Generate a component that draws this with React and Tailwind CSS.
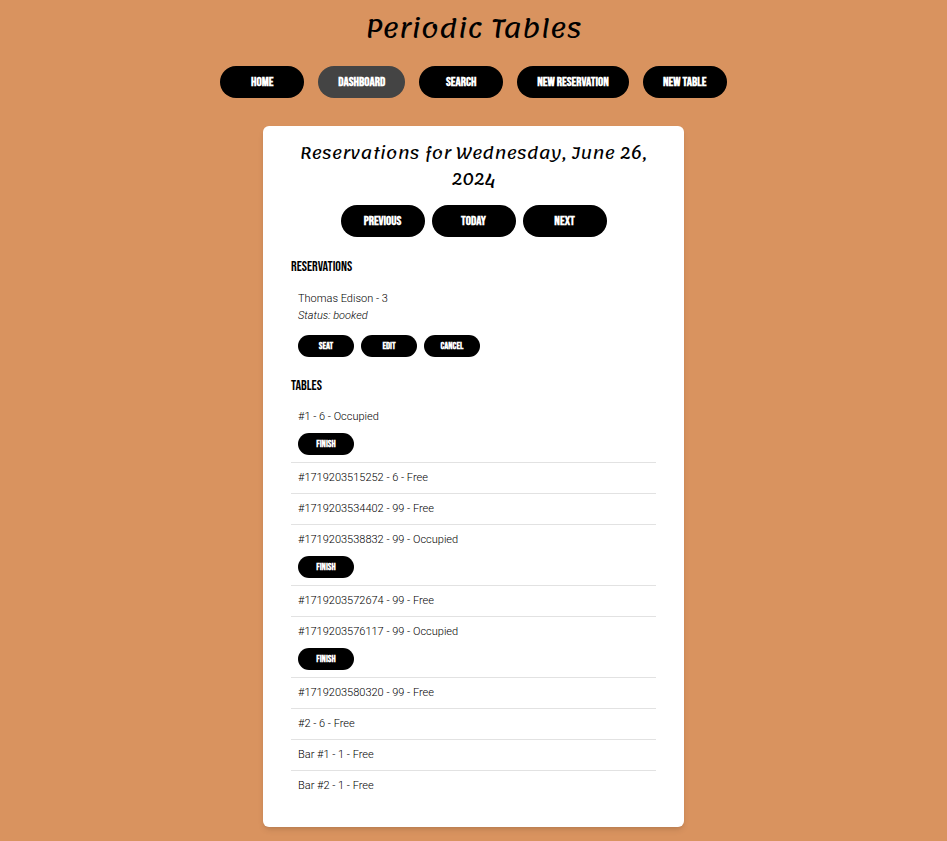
import React from "react";

const navItems = ["Home", "Dashboard", "Search", "New Reservation", "New Table"];

const tables = [
  { name: "#1", capacity: 6, occupied: true },
  { name: "#1719203515252", capacity: 6, occupied: false },
  { name: "#1719203534402", capacity: 99, occupied: false },
  { name: "#1719203538832", capacity: 99, occupied: true },
  { name: "#1719203572674", capacity: 99, occupied: false },
  { name: "#1719203576117", capacity: 99, occupied: true },
  { name: "#1719203580320", capacity: 99, occupied: false },
  { name: "#2", capacity: 6, occupied: false },
  { name: "Bar #1", capacity: 1, occupied: false },
  { name: "Bar #2", capacity: 1, occupied: false },
];

const display = "font-['Lemonada','DejaVu_Sans',sans-serif] font-normal text-black text-center";
const condensed = "font-['Bebas_Neue','Liberation_Sans_Narrow',sans-serif] uppercase";
const pill = `${condensed} flex h-8 min-w-[84px] items-center justify-center rounded-full px-5 text-[13px] leading-4 font-bold text-white`;

function SmallButton({ children }) {
  return (
    <button
      type="button"
      className={`${condensed} flex h-[22px] w-14 items-center justify-center rounded-full bg-black text-[10px] leading-4 font-bold text-white hover:bg-[#444]`}
    >
      {children}
    </button>
  );
}

function SectionTitle({ children }) {
  return <h3 className={`${condensed} text-[14px] leading-5 font-normal text-black`}>{children}</h3>;
}

export default function App() {
  return (
    <div className="min-h-screen bg-[#d9935f] pt-[7px] pb-[14px] font-[Roboto,sans-serif] text-[11px] leading-4 font-light text-black">
      <header>
        <h1 className={`${display} text-[25px] leading-[42px]`}>Periodic Tables</h1>
        <nav className="mt-[17px] flex flex-wrap justify-center gap-[14px]">
          {navItems.map((item) => (
            <a key={item} href="#" className={`${pill} ${item === "Dashboard" ? "bg-[#444]" : "bg-black"}`}>
              {item}
            </a>
          ))}
        </nav>
      </header>

      <main className="mx-auto mt-7 max-w-[421px] rounded-md bg-white px-7 pt-[14px] pb-[26px] shadow-md">
        <h2 className={`${display} text-[16px] leading-[26px]`}>Reservations for Wednesday, June 26, 2024</h2>
        <div className="mt-[13px] flex justify-center gap-[7px]">
          {["Previous", "Today", "Next"].map((label) => (
            <button key={label} type="button" className={`${pill} bg-black hover:bg-[#444]`}>
              {label}
            </button>
          ))}
        </div>

        <section className="mt-5">
          <SectionTitle>Reservations</SectionTitle>
          <div className="mt-[6px] p-[7px]">
            <p className="leading-[17px]">Thomas Edison - 3</p>
            <p className="leading-[17px] italic">Status: booked</p>
            <div className="mt-[11px] flex gap-[7px]">
              <SmallButton>Seat</SmallButton>
              <SmallButton>Edit</SmallButton>
              <SmallButton>Cancel</SmallButton>
            </div>
          </div>
        </section>

        <section className="mt-3">
          <SectionTitle>Tables</SectionTitle>
          <ul className="mt-[6px] divide-y divide-[#e2e2e2]">
            {tables.map((table) => (
              <li key={table.name} className="p-[7px]">
                <p>
                  {table.name} - {table.capacity} - {table.occupied ? "Occupied" : "Free"}
                </p>
                {table.occupied && (
                  <div className="mt-2">
                    <SmallButton>Finish</SmallButton>
                  </div>
                )}
              </li>
            ))}
          </ul>
        </section>
      </main>
    </div>
  );
}
